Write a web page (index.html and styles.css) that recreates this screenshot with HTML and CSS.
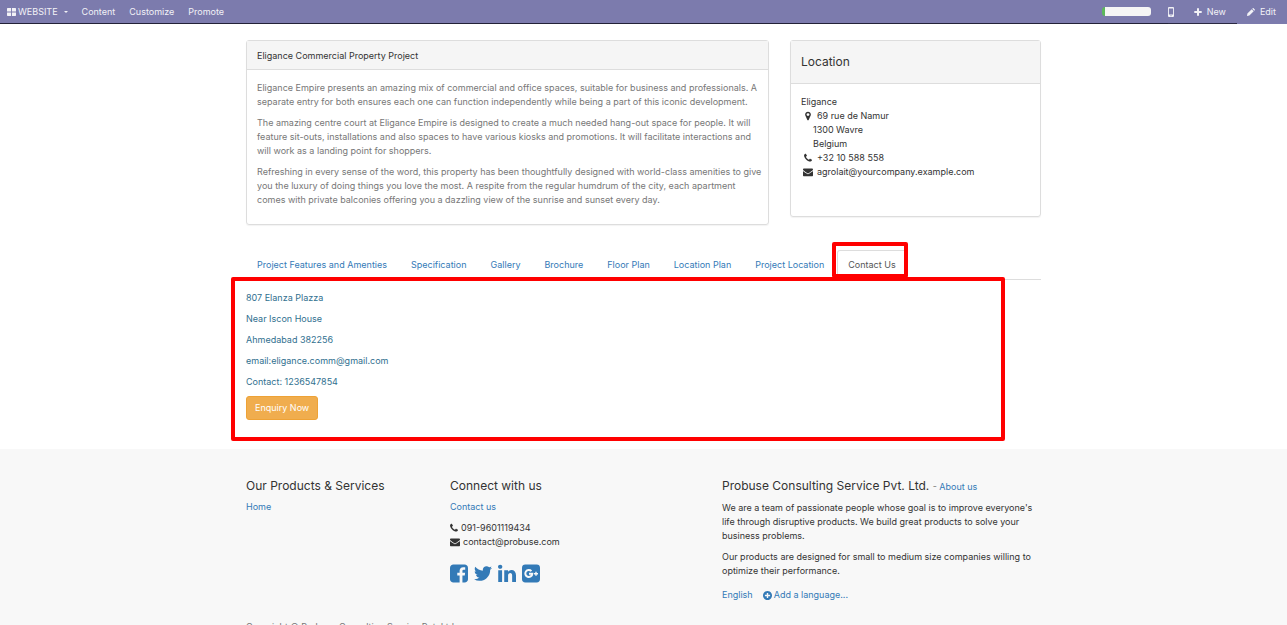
FILE: index.html
```html
<!DOCTYPE html>
<html lang="en">
<head>
<meta charset="utf-8">
<meta name="viewport" content="width=device-width, initial-scale=1">
<title>Eligance Commercial Property Project</title>
<link rel="stylesheet" href="styles.css">
</head>
<body>
<svg class="sprite" aria-hidden="true">
  <symbol id="phone" viewBox="0 0 1408 1792"><path d="M1408 1240q0 27-10 70.5t-21 68.5q-21 50-122 106-94 51-186 51-27 0-53-3.5t-57.5-12.5-47-14.5-55.5-20.5-49-18q-98-35-175-83-127-79-264-216t-216-264q-48-77-83-175-3-9-18-49t-20.5-55.5-14.5-47-12.5-57.5-3.5-53q0-92 51-186 56-101 106-122 25-11 68.5-21t70.5-10q14 0 21 3 18 6 53 76 11 19 30 54t35 63.5 31 53.5q3 4 17.5 25t21.5 35.5 7 28.5q0 20-28.5 50t-62 55-62 53-28.5 46q0 9 5 22.5t8.5 20.5 14 24 11.5 19q76 137 174 235t235 174q2 1 19 11.5t24 14 20.5 8.5 22.5 5q18 0 46-28.5t53-62 55-62 50-28.5q14 0 28.5 7t35.5 21.5 25 17.5q25 15 53.5 31t63.5 35 54 30q70 35 76 53 3 7 3 21z"/></symbol>
  <symbol id="envelope" viewBox="0 0 1792 1792"><path d="M1792 710v794q0 66-47 113t-113 47h-1472q-66 0-113-47t-47-113v-794q44 49 101 87 362 246 497 345 57 42 92.5 65.5t94.5 48 110 24.5h2q51 0 110-24.5t94.5-48 92.5-65.5q170-123 498-345 57-39 100-87zm0-294q0 79-49 151t-122 123q-376 261-468 325-10 7-42.5 31t-54 38.5-52 32.5-57.5 27-50 9h-2q-23 0-50-9t-57.5-27-52-32.5-54-38.5-42.5-31q-91-64-262-182.5t-205-142.5q-62-42-117-115.5t-55-136.5q0-78 41.5-130t118.5-52h1472q65 0 112.5 47t47.5 113z"/></symbol>
</svg>

<nav class="topbar" aria-label="Website editor">
  <div class="menu">
    <a class="brand" href="#"><svg class="grid-icon" viewBox="0 0 9 8" aria-hidden="true"><path d="M.6 0h3.5v3.5H0V.6zM5 0h3.4L9 .6v2.900H5zM0 4.500h4.100V8H.6L0 7.400zM5 4.500h4v2.900L8.400 8H5z"/></svg>WEBSITE <svg class="caret" viewBox="0 0 4 2" aria-hidden="true"><path d="M0 0h4L2 2z"/></svg></a>
    <a href="#">Content</a>
    <a href="#">Customize</a>
    <a href="#">Promote</a>
  </div>
  <div class="tools">
    <div class="meter" role="progressbar" aria-label="Setup progress" aria-valuenow="6"><div class="meter-fill" style="width:6%"></div></div>
    <a class="tool" href="#" aria-label="Mobile preview"><svg class="mobile" viewBox="0 0 6 10" aria-hidden="true"><path fill-rule="evenodd" d="M1 0h4q1 0 1 1v8q0 1-1 1H1Q0 10 0 9V1q0-1 1-1zM.9 1.500v6h4.200v-6zM3 8.200a.6.600 0 1 0 .01 0z"/></svg></a>
    <a class="tool new" href="#"><svg class="small-icon" viewBox="0 0 8 8" aria-hidden="true"><path d="M3 0.300h2V3h2.700v2H5v2.700H3V5H.3V3H3z"/></svg>New</a>
    <a class="tool edit" href="#"><svg class="small-icon" viewBox="0 0 8 8" aria-hidden="true"><path d="M0 8l.4-2.400L4.700 1.300l2 2L2.400 7.600zM5.200.8l.6-.6q.4-.4.8 0l1.200 1.200q.4.400 0 .8l-.6.6z"/></svg>Edit</a>
  </div>
</nav>

<main class="container">
  <div class="panels">
    <section class="panel about">
      <h1 class="panel-head">Eligance Commercial Property Project</h1>
      <div class="panel-body muted">
        <p>Eligance Empire presents an amazing mix of commercial and office spaces, suitable for business and professionals. A separate entry for both ensures each one can function independently while being a part of this iconic development.</p>
        <p>The amazing centre court at Eligance Empire is designed to create a much needed hang-out space for people. It will feature sit-outs, installations and also spaces to have various kiosks and promotions. It will facilitate interactions and will work as a landing point for shoppers.</p>
        <p>Refreshing in every sense of the word, this property has been thoughtfully designed with world-class amenities to give you the luxury of doing things you love the most. A respite from the regular humdrum of the city, each apartment comes with private balconies offering you a dazzling view of the sunrise and sunset every day.</p>
      </div>
    </section>
    <section class="panel location">
      <h2 class="panel-head large">Location</h2>
      <address class="panel-body">
        <div>Eligance</div>
        <div class="line"><svg class="line-icon" viewBox="-256 0 1536 1792" aria-hidden="true"><path d="M768 640q0-106-75-181t-181-75-181 75-75 181 75 181 181 75 181-75 75-181zm256 0q0 109-33 179l-364 774q-16 33-47.500 52t-67.500 19-67.500-19-46.500-52l-365-774q-33-70-33-179 0-212 150-362t362-150 362 150 150 362z"/></svg>69 rue de Namur</div>
        <div class="indent">1300 Wavre</div>
        <div class="indent">Belgium</div>
        <div class="line"><svg class="line-icon" aria-hidden="true"><use href="#phone"/></svg>+32 10 588 558</div>
        <div class="line"><svg class="line-icon" aria-hidden="true"><use href="#envelope"/></svg>agrolait@yourcompany.example.com</div>
      </address>
    </section>
  </div>

  <section class="details">
    <nav class="tabs" aria-label="Project details">
      <a href="#">Project Features and Amenties</a>
      <a href="#">Specification</a>
      <a href="#">Gallery</a>
      <a href="#">Brochure</a>
      <a href="#">Floor Plan</a>
      <a href="#">Location Plan</a>
      <a href="#">Project Location</a>
      <a class="active" href="#" aria-current="true">Contact Us<span class="mark mark-tab"></span></a>
    </nav>
    <div class="contact">
      <p>807 Elanza Plazza</p>
      <p>Near Iscon House</p>
      <p>Ahmedabad 382256</p>
      <p>email:eligance.comm@gmail.com</p>
      <p>Contact: 1236547854</p>
      <button class="enquiry" type="button">Enquiry Now</button>
      <span class="mark mark-pane"></span>
    </div>
  </section>
</main>

<footer class="footer">
  <div class="container columns">
    <section class="col-products">
      <h2>Our Products &amp; Services</h2>
      <p><a href="#">Home</a></p>
    </section>
    <section class="col-connect">
      <h2>Connect with us</h2>
      <p><a href="#">Contact us</a></p>
      <div class="reach"><svg class="phone" aria-hidden="true"><use href="#phone"/></svg>091-9601119434</div>
      <div class="reach"><svg class="envelope" aria-hidden="true"><use href="#envelope"/></svg>contact@probuse.com</div>
      <div class="social">
        <a href="#" aria-label="Facebook"><svg viewBox="0 128 1536 1536"><path d="M1248 128q119 0 203.500 84.500t84.500 203.500v960q0 119-84.500 203.500t-203.500 84.500h-188v-595h199l30-232h-229v-148q0-56 23.500-84t91.500-28l122-1v-207q-63-9-178-9-136 0-217.500 80t-81.500 226v171h-200v232h200v595h-532q-119 0-203.500-84.500t-84.500-203.500v-960q0-119 84.500-203.500t203.500-84.500h960z"/></svg></a>
        <a href="#" aria-label="Twitter"><svg viewBox="44 128 1576 1536"><path d="M1620 408q-67 98-162 167 1 14 1 42 0 130-38 259.500t-115.500 248.500-184.500 210.500-258 146-323 54.500q-271 0-496-145 35 4 78 4 225 0 401-138-105-2-188-64.500t-114-159.500q33 5 61 5 43 0 85-11-112-23-185.500-111.500t-73.500-205.500v-4q68 38 146 41-66-44-105-115t-39-154q0-88 44-163 121 149 294.500 238.500t371.500 99.500q-8-38-8-74 0-134 94.500-228.500t228.500-94.500q140 0 236 102 109-21 205-78-37 115-142 178 93-10 186-50z"/></svg></a>
        <a href="#" aria-label="LinkedIn"><svg viewBox="0 128 1536 1536"><path d="M349 625v991h-330v-991h330zm21-306q1 73-50.500 122t-135.500 49h-2q-82 0-132-49t-50-122q0-74 51.500-122.500t134.500-48.500 133 48.500 51 122.500zm1166 729v568h-329v-530q0-105-40.500-164.500t-126.500-59.500q-63 0-105.500 34.500t-63.500 85.500q-11 30-11 81v553h-329q2-399 2-647t-1-296l-1-48h329v144h-2q20-32 41-56t56.500-52 87-43.500 114.500-15.500q171 0 275 113.500t104 332.500z"/></svg></a>
        <a href="#" aria-label="Google Plus"><svg viewBox="0 0 18 18"><rect width="18" height="18" rx="3.400"/><path class="knock" d="M9.400 6.600A3.500 3.500 0 1 0 10.300 9.300H7"/><path class="knock thin" d="M14 7.200v4M12 9.200h4"/></svg></a>
      </div>
    </section>
    <section class="col-company">
      <h2>Probuse Consulting Service Pvt. Ltd. <small>- <a href="#">About us</a></small></h2>
      <p>We are a team of passionate people whose goal is to improve everyone's life through disruptive products. We build great products to solve your business problems.</p>
      <p>Our products are designed for small to medium size companies willing to optimize their performance.</p>
      <div class="languages">
        <a href="#">English</a>
        <a class="add" href="#"><svg viewBox="0 0 9 9" aria-hidden="true"><path fill-rule="evenodd" d="M4.500 0a4.500 4.500 0 1 0 .01 0zM3.800 1.900h1.400v1.900h1.900v1.400H5.200v1.900H3.800V5.200H1.900V3.800h1.900z"/></svg>Add a language...</a>
      </div>
    </section>
    <div class="copyright">Copyright © Probuse Consulting Service Pvt. Ltd.</div>
  </div>
</footer>
</body>
</html>
```
FILE: styles.css
```css
* { box-sizing: border-box; }
html { scrollbar-width: none; }
body {
  margin: 0;
  background: #fff;
  color: #333;
  font: 9px/14px Inter, "Liberation Sans", Arial, sans-serif;
}
a { color: #337ab7; text-decoration: none; }
p { margin: 0 0 7px; }
h1, h2 { margin: 0; font-weight: 400; }
svg { fill: currentColor; }
.sprite { display: none; }
.container { width: 100%; max-width: 795px; margin: 0 auto; }

.topbar {
  display: flex;
  justify-content: space-between;
  height: 24px;
  background: #7c7bad;
}
.topbar a { color: #fff; opacity: .9; }
.menu {
  display: flex;
  flex: 1;
  gap: 14px;
  padding: 5px 7px;
  border-bottom: 1px solid #222137;
}
.brand { display: flex; align-items: center; gap: 2px; }
.grid-icon { width: 9px; height: 8px; }
.caret { width: 4px; height: 2px; margin-left: 4px; }
.tools { display: flex; }
.meter {
  display: flex;
  width: 66px;
  height: 24px;
  padding: 7px 17px 7px 0;
  border-bottom: 1px solid #222137;
}
.meter::after { content: ""; flex: 1; background: #f5f5f5; border-radius: 0 3px 3px 0; }
.meter-fill { background: #5cb85c; border-radius: 3px 0 0 3px; }
.tool { display: flex; align-items: center; gap: 5px; padding-bottom: 1px; }
.tool.new { padding-left: 20px; padding-right: 11px; }
.tool.edit { padding-left: 10px; padding-right: 11px; }
.tool:not(.edit) { border-bottom: 1px solid #222137; padding-bottom: 0; }
.mobile { width: 6px; height: 10px; }
.small-icon { width: 8px; height: 8px; }

.panels {
  display: grid;
  grid-template-columns: repeat(12, 1fr);
  column-gap: 21px;
  align-items: start;
  padding-top: 16px;
}
.about { grid-column: span 8; }
.location { grid-column: span 4; }
.panel {
  border: 1px solid #ddd;
  border-radius: 3px;
  box-shadow: 0 1px 1px rgba(0, 0, 0, .05);
}
.panel-head {
  padding: 8px 10px 6px;
  background: #f5f5f5;
  border-bottom: 1px solid #ddd;
  font-size: 9px;
  line-height: 14px;
}
.panel-head.large { padding: 14px 10px; font-size: 12px; }
.panel-body { padding: 11px 4px 10px 10px; font-style: normal; }
.location .panel-body { padding-bottom: 37px; }
.muted { color: #777; }
.line { display: flex; align-items: center; gap: 4px; padding-left: 2px; }
.line-icon { width: 10px; height: 10px; }
.indent { padding-left: 12px; }

.details { padding-top: 25px; }
.tabs { display: flex; gap: 2px; border-bottom: 1px solid #ddd; }
.tabs a {
  padding: 7px 10px;
  border: 1px solid transparent;
  border-bottom: 0;
  border-radius: 3px 3px 0 0;
  white-space: nowrap;
}
.tabs .active { position: relative; color: #555; border-color: #ddd; }
.contact { position: relative; padding: 11px 0 29px; color: #31708f; }
.enquiry {
  display: block;
  height: 24px;
  padding: 0 8px;
  color: #fff;
  background: #f0ad4e;
  border: 1px solid #eea236;
  border-radius: 3px;
  font: inherit;
}
.mark { position: absolute; border: 4px solid #f00; border-radius: 2px; pointer-events: none; }
.mark-tab { inset: -9px -2px 1px -6px; }
.mark-pane { inset: -3px 36px 8px -15px; }

.footer { background: #f8f8f8; }
.columns {
  display: grid;
  grid-template-columns: repeat(12, 1fr);
  column-gap: 21px;
  padding-top: 30px;
}
.columns h2 { margin-bottom: 7px; font-size: 12px; line-height: 14px; }
.columns small { color: #777; font-size: 9px; }
.col-products { grid-column: span 3; }
.col-connect { grid-column: span 4; }
.col-company { grid-column: span 5; }
.reach { display: flex; align-items: center; gap: 3px; }
.phone { width: 8px; height: 10px; }
.envelope { width: 10px; height: 10px; }
.social { display: flex; gap: 6px; padding-top: 15px; }
.social svg { display: block; width: 18px; height: 19px; }
.knock { fill: none; stroke: #f8f8f8; stroke-width: 2; }
.thin { stroke-width: 1.400; }
.languages { display: flex; gap: 10px; padding-top: 3px; }
.add { display: flex; align-items: center; gap: 2px; }
.add svg { width: 9px; height: 9px; }
.copyright { grid-column: 1 / -1; padding: 18px 0 14px; color: #777; }
```
